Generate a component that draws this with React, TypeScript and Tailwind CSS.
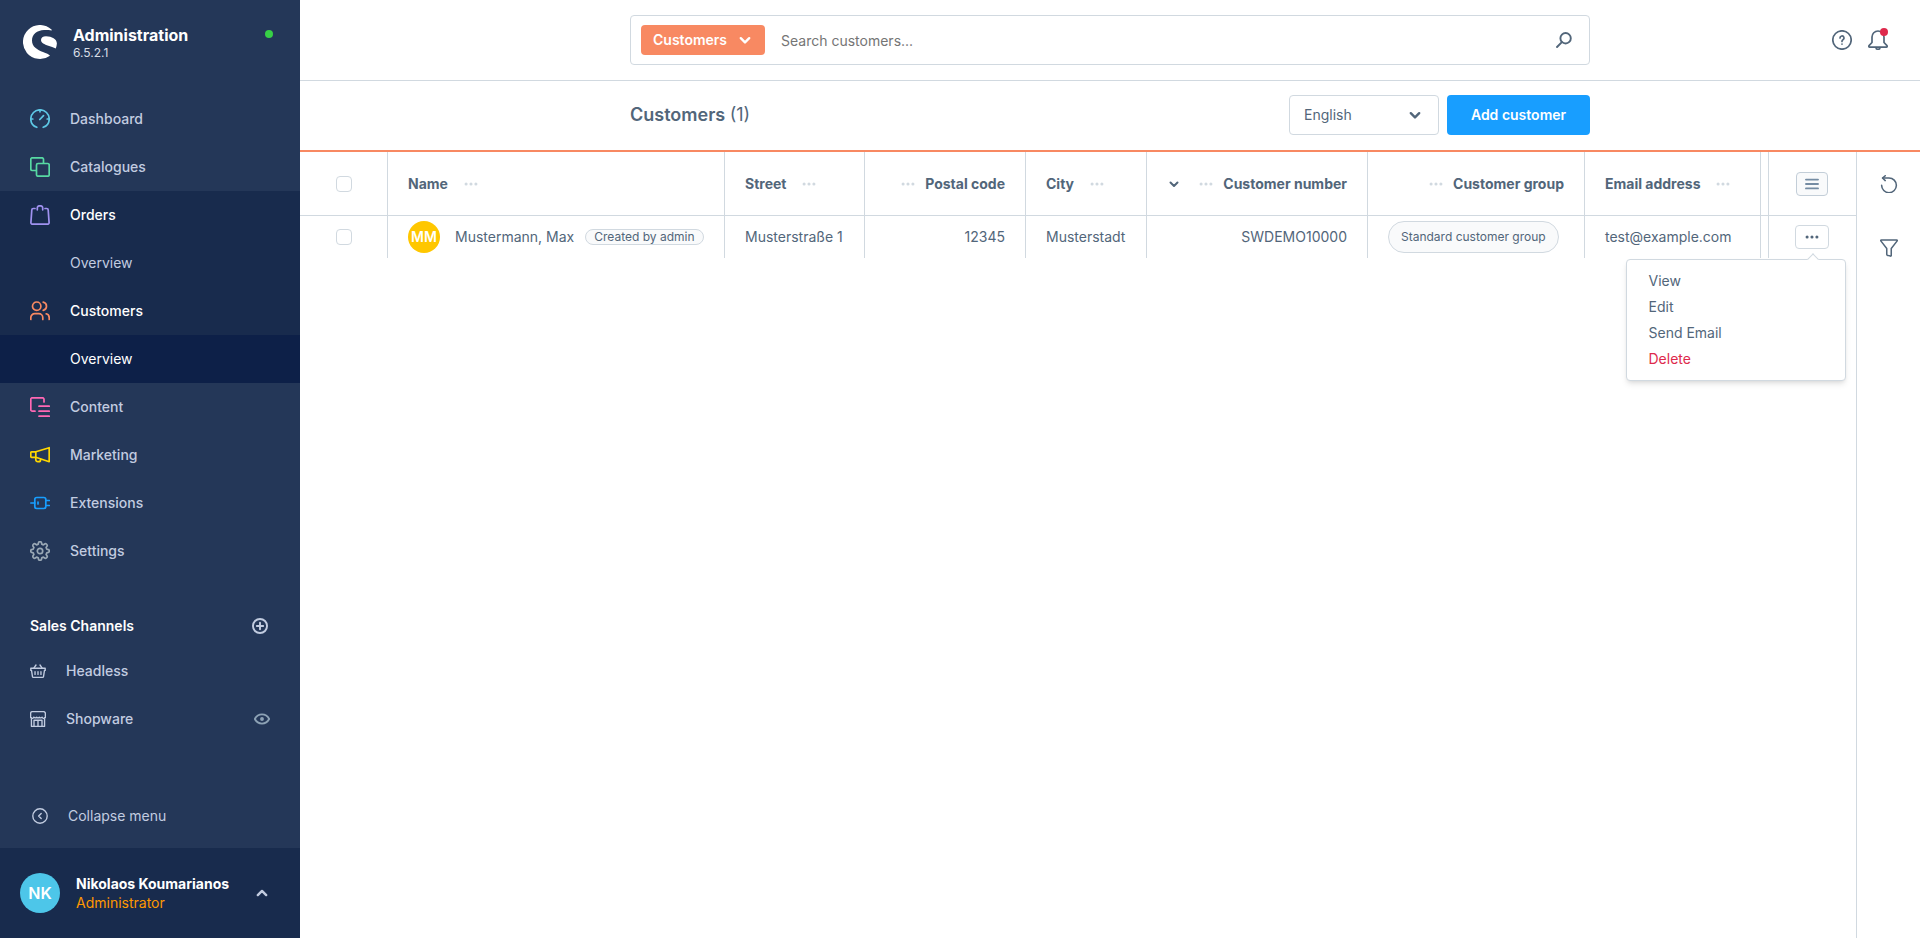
import type { ReactNode } from 'react';

type IconProps = { className?: string; children: ReactNode };

function Icon({ className = 'size-5', children }: IconProps) {
  return (
    <svg
      viewBox="0 0 20 20"
      className={className}
      fill="none"
      stroke="currentColor"
      strokeWidth="1.7"
      strokeLinecap="round"
      strokeLinejoin="round"
      aria-hidden="true"
    >
      {children}
    </svg>
  );
}

const icons = {
  dashboard: (
    <>
      <path d="M6.8 18.3C3.3 17 .8 13.8 .8 10a9.2 9.2 0 0 1 18.4 0c0 3.8-2.5 7-6 8.3" />
      <path d="M10 .8v2M.8 10h2M17.2 10h2M9.800 10.5l3.700-3.900" />
    </>
  ),
  catalogues: (
    <>
      <path d="M6 13.5H2.300A1.500 1.500 0 0 1 .8 12V2.300A1.500 1.500 0 0 1 2.300 .8H12a1.500 1.500 0 0 1 1.500 1.500V6" />
      <rect x="6.5" y="6.5" width="12.7" height="12.7" rx="1.5" />
    </>
  ),
  orders: (
    <>
      <path d="M5 3.5H3.300A1.500 1.500 0 0 0 1.800 5L.9 17.600a1.500 1.500 0 0 0 1.500 1.600h15.200a1.500 1.500 0 0 0 1.500-1.600L18.200 5a1.500 1.500 0 0 0-1.500-1.500H15" />
      <path d="M7.300 4.800V3a2.200 2.200 0 0 1 2.200-2.200h1A2.200 2.200 0 0 1 12.700 3v1.800" />
    </>
  ),
  customers: (
    <>
      <circle cx="6.7" cy="5.2" r="4.2" />
      <path d="M.8 18.4v-1.7a4 4 0 0 1 4-4h4a4 4 0 0 1 4 4v1.700" />
      <path d="M13.200 1.200a4.200 4.200 0 0 1 0 8.200M16.200 12.800a4 4 0 0 1 3 3.900v1.700" />
    </>
  ),
  content: (
    <>
      <path d="M5 14.200H2.300A1.500 1.500 0 0 1 .8 12.700V2.300A1.500 1.500 0 0 1 2.300 .8H12.500A1.500 1.500 0 0 1 14 2.300V5" />
      <path d="M9 9.2h10.3M9 14.2h10.3M9 19.2h10.3" />
    </>
  ),
  marketing: (
    <>
      <path d="M5.8 6.800 19.200 2.700v14L5.800 12.300z" />
      <path d="M5.8 6.800H1.500a.7 .7 0 0 0-.7 .7v4.100c0 .4 .3 .7 .7 .7h4.300M5.800 12.500v2.200a2 2 0 0 0 2 2h.8a2 2 0 0 0 2-2v-.5" />
    </>
  ),
  extensions: (
    <>
      <rect x="4.8" y="4.5" width="11" height="11" rx="2" />
      <path d="M.8 10h4M8 9v2M15.8 7.5h3.500M15.800 12.500h3.500" />
    </>
  ),
  settings: (
    <>
      <circle cx="10" cy="10" r="2.7" />
      <path d="M8.4 2.3a1.6 1.6 0 0 1 3.2 0l.2.9 1.6.7.9-.6a1.6 1.6 0 0 1 2.4 2.3l-.6.9.7 1.7.9.2a1.6 1.6 0 0 1 0 3.2l-.9.2-.7 1.7.6.9a1.6 1.6 0 0 1-2.4 2.3l-.9-.6-1.6.7-.2.9a1.6 1.6 0 0 1-3.2 0l-.2-.9-1.6-.7-.9.6a1.6 1.6 0 0 1-2.4-2.3l.6-.9-.7-1.7-.9-.2a1.6 1.6 0 0 1 0-3.2l.9-.2.7-1.7-.6-.9a1.6 1.6 0 0 1 2.4-2.3l.9.6 1.6-.7z" />
    </>
  ),
  headless: (
    <>
      <path d="M1 6.5h18v2.8h-.9l-1.2 7.6a1.2 1.2 0 0 1-1.2 1H4.3a1.2 1.2 0 0 1-1.2-1L1.9 9.3H1z" />
      <path d="m5 6 2.5-3.5M15 6l-2.500-3.500M6.300 10.800v3.500M10 10.800v3.500M13.700 10.800v3.500" />
    </>
  ),
  shopware: (
    <>
      <path d="M1.8 8.5v10.7h16.4V8.5M3 .8h14a2.2 2.2 0 0 1 2.2 2.2v3.5a2 2 0 0 1-4 1.200 2.200 2.200 0 0 1-3.500 .1 2.200 2.200 0 0 1-3.400 0 2.200 2.200 0 0 1-3.500-.1 2 2 0 0 1-4-1.200V3A2.200 2.200 0 0 1 3 .8z" />
      <path d="M5 19v-7.500h10V19M10 11.500V19" />
    </>
  ),
  eye: (
    <>
      <path d="M1 10c2-3.8 5.300-5.800 9-5.800s7 2 9 5.800c-2 3.800-5.300 5.800-9 5.800S3 13.800 1 10z" />
      <circle cx="10" cy="10" r="1.2" fill="currentColor" />
    </>
  ),
  plusCircle: (
    <>
      <circle cx="10" cy="10" r="8.8" />
      <path d="M10 6v8M6 10h8" />
    </>
  ),
  collapse: (
    <>
      <circle cx="10" cy="10" r="9" />
      <path d="m11.5 6.800-3.200 3.200 3.200 3.200" />
    </>
  ),
  chevronDown: <path d="m3 7 7 7 7-7" />,
  chevronUp: <path d="m3 13.500 7-7 7 7" />,
  search: (
    <>
      <circle cx="12" cy="7.8" r="6.5" />
      <path d="m7.300 12.700-6 6" />
    </>
  ),
  help: (
    <>
      <circle cx="10" cy="10" r="9.200" />
      <path d="M8 8a2 2 0 1 1 3 1.700c-.7 .4-1 .8-1 1.500v.3M10 14v.1" />
    </>
  ),
  bell: (
    <>
      <path d="M4 12.500V7a6 6 0 0 1 12 0v5.500l3 3.200c.5 .6 .1 1.500-.6 1.500H1.600c-.7 0-1.100-.9-.6-1.500z" />
      <path d="M8 17.500a2 1.800 0 0 0 4 0" />
    </>
  ),
  reset: (
    <>
      <path d="M1.800 11.500A8.200 8.200 0 1 0 10 3.300H3" />
      <path d="M5.800 .8 2.800 3.400l3 2.800" />
    </>
  ),
  filter: <path d="M1.500 1h17c.6 0 .9 .6 .6 1.100L12.500 10.500V18.200c0 .6-.4 .9-1 .8l-3-.8c-.6-.1-1-.6-1-1.200v-6.500L.9 2.100C.6 1.600 .9 1 1.500 1z" />,
  list: <path d="M2.500 4.500h15M2.500 10h15M2.500 15.500h15" />,
};

function Dots({ className }: { className?: string }) {
  return (
    <svg viewBox="0 0 20 20" className={className} fill="currentColor" aria-hidden="true">
      <circle cx="3" cy="10" r="2.200" />
      <circle cx="10" cy="10" r="2.200" />
      <circle cx="17" cy="10" r="2.200" />
    </svg>
  );
}

const navigation = [
  { label: 'Dashboard', icon: icons.dashboard, color: 'text-[#5ec8e5]' },
  { label: 'Catalogues', icon: icons.catalogues, color: 'text-[#57d9a3]' },
  { label: 'Orders', icon: icons.orders, color: 'text-[#a092f0]', open: true, child: 'Overview' },
  { label: 'Customers', icon: icons.customers, color: 'text-[#f88962]', open: true, child: 'Overview', childActive: true },
  { label: 'Content', icon: icons.content, color: 'text-[#ff68b4]' },
  { label: 'Marketing', icon: icons.marketing, color: 'text-[#ffd700]' },
  { label: 'Extensions', icon: icons.extensions, color: 'text-[#189eff]' },
  { label: 'Settings', icon: icons.settings, color: 'text-[#9aa8b5]' },
];

const columns = [
  { label: 'Name', width: 'w-[337px]' },
  { label: 'Street', width: 'w-[140px]' },
  { label: 'Postal code', width: 'w-[161px]', right: true },
  { label: 'City', width: 'w-[121px]' },
  { label: 'Customer number', width: 'w-[221px]', right: true, sorted: true },
  { label: 'Customer group', width: 'w-[217px]', right: true },
  { label: 'Email address', width: 'w-[176px]' },
];

const menuItems = ['View', 'Edit', 'Send Email', 'Delete'];

function Checkbox({ label }: { label: string }) {
  return (
    <input
      type="checkbox"
      aria-label={label}
      className="mx-auto block size-4 appearance-none rounded border border-[#d1d9e0] bg-white checked:bg-[#189eff]"
    />
  );
}

function Logo() {
  return (
    <svg viewBox="0 0 34 34" className="size-[34px]" fill="#fff" aria-hidden="true">
      <path d="M28.500 4.500A17 17 0 1 0 27 30.700c-1-1.300-3.700-2.400-7-3.700-5.600-2.200-11-5-11-11.500C9 9.500 14 5.300 21 5c3-.1 5.500 .1 7.500 .4 .4-.1 .3-.6 0-.9z" />
      <path d="M33.900 18.500c-.2-2.500-1.400-4.200-3.300-5.300-2-1.100-4.500-1.900-7.600-1.900-3.200 0-5 1.500-5 3.800 0 3 3.500 4.300 7.300 5.700 2.600 .9 5.200 1.800 7.500 2.600 .6-1.500 1-3.200 1.100-4.900z" />
    </svg>
  );
}

function Sidebar() {
  return (
    <aside className="flex w-[300px] shrink-0 flex-col bg-[#243758] text-[#c2cce0]">
      <div className="flex h-[95px] items-start gap-4 pt-[25px] pr-[27px] pl-[23px]">
        <Logo />
        <div className="flex-1 text-white">
          <div className="text-base leading-5 font-bold">Administration</div>
          <div className="text-xs leading-4 text-[#d8dde6]">6.5.2.1</div>
        </div>
        <span className="mt-[5px] size-2 rounded-full bg-[#37d046]" />
      </div>

      <nav>
        <ul>
          {navigation.map((item) => (
            <li key={item.label} className={item.open ? 'bg-[#182b4d]' : ''}>
              <a
                href="#"
                className={`flex h-12 items-center gap-5 pl-[30px] text-sm font-medium ${item.open ? 'text-white' : ''}`}
              >
                <Icon className={`size-5 ${item.color}`}>{item.icon}</Icon>
                {item.label}
              </a>
              {item.child && (
                <a
                  href="#"
                  className={`flex h-12 items-center pl-[70px] text-sm ${item.childActive ? 'bg-[#0d2048] text-white' : ''}`}
                >
                  {item.child}
                </a>
              )}
            </li>
          ))}
        </ul>
      </nav>

      <section className="mt-[30px]">
        <div className="flex h-[42px] items-center justify-between pr-8 pl-[30px]">
          <h2 className="text-sm font-semibold text-white">Sales Channels</h2>
          <button type="button" aria-label="Add sales channel">
            <Icon className="size-4 stroke-[2.4px]">{icons.plusCircle}</Icon>
          </button>
        </div>
        <a href="#" className="flex h-12 items-center gap-5 pl-[30px] text-sm font-medium">
          <Icon className="size-4">{icons.headless}</Icon>
          Headless
        </a>
        <div className="flex h-12 items-center justify-between px-[30px]">
          <a href="#" className="flex items-center gap-5 text-sm font-medium">
            <Icon className="size-4">{icons.shopware}</Icon>
            Shopware
          </a>
          <button type="button" aria-label="Open storefront" className="text-[#8da2b5]">
            <Icon className="size-4 stroke-[2.4px]">{icons.eye}</Icon>
          </button>
        </div>
      </section>

      <div className="mt-auto">
        <button type="button" className="flex h-16 w-full items-center gap-5 pl-8 text-sm">
          <Icon className="size-4">{icons.collapse}</Icon>
          Collapse menu
        </button>
        <div className="flex h-[90px] items-center gap-4 bg-[#182b4d] pr-8 pl-5">
          <span className="flex size-10 items-center justify-center rounded-full bg-[#4dc6e9] text-base font-semibold text-white">
            NK
          </span>
          <div className="flex-1 text-sm leading-[19px]">
            <div className="font-bold text-white">Nikolaos Koumarianos</div>
            <div className="text-[#ff9800]">Administrator</div>
          </div>
          <button type="button" aria-label="User menu">
            <Icon className="size-3 stroke-[4px]">{icons.chevronUp}</Icon>
          </button>
        </div>
      </div>
    </aside>
  );
}

function TopBar() {
  return (
    <header className="grid h-[81px] grid-cols-[1fr_960px_1fr] items-center border-b border-[#d1d9e0]">
      <div />
      <div className="flex h-[50px] items-center rounded border border-[#d1d9e0] pr-[17px] pl-2.5">
        <button
          type="button"
          className="flex h-[30px] items-center gap-3 rounded bg-[#f88962] pr-3.5 pl-3 text-sm font-semibold text-white"
        >
          Customers
          <Icon className="size-3 stroke-[4px]">{icons.chevronDown}</Icon>
        </button>
        <input
          type="text"
          aria-label="Search customers"
          placeholder="Search customers..."
          className="min-w-0 flex-1 px-4 pt-0.5 text-sm outline-none placeholder:text-[#757575]"
        />
        <button type="button" aria-label="Search">
          <Icon className="size-4 stroke-[2.4px]">{icons.search}</Icon>
        </button>
      </div>
      <div className="flex items-center justify-end gap-4 pr-8">
        <button type="button" aria-label="Help">
          <Icon>{icons.help}</Icon>
        </button>
        <button type="button" aria-label="Notifications" className="relative">
          <Icon>{icons.bell}</Icon>
          <span className="absolute -top-0.5 right-0 size-2 rounded-full bg-[#de294c]" />
        </button>
      </div>
    </header>
  );
}

function PageHeader() {
  return (
    <div className="grid h-[71px] grid-cols-[1fr_960px_1fr] items-start border-b-2 border-[#f88962] pt-3.5">
      <div />
      <div className="flex items-center gap-2">
        <h1 className="flex-1 text-lg font-semibold">
          Customers <span className="font-normal">(1)</span>
        </h1>
        <div className="relative">
          <select
            aria-label="Language"
            className="h-10 w-[150px] appearance-none rounded border border-[#d1d9e0] bg-white px-3.5 text-sm"
          >
            <option>English</option>
          </select>
          <Icon className="pointer-events-none absolute top-3.5 right-[18px] size-3 stroke-[4px]">
            {icons.chevronDown}
          </Icon>
        </div>
        <button type="button" className="h-10 w-[143px] rounded bg-[#189eff] text-sm font-semibold text-white">
          Add customer
        </button>
      </div>
    </div>
  );
}

function ContextMenu() {
  return (
    <div className="absolute top-[34px] -right-[17px] w-[220px] rounded border border-[#d1d9e0] bg-white py-2 shadow-md">
      <span className="absolute -top-[5px] right-7 size-2 rotate-45 border-t border-l border-[#d1d9e0] bg-white" />
      <ul>
        {menuItems.map((item) => (
          <li key={item}>
            <button
              type="button"
              className={`block w-full px-[22px] text-left leading-[26px] ${item === 'Delete' ? 'text-[#de294c]' : ''}`}
            >
              {item}
            </button>
          </li>
        ))}
      </ul>
    </div>
  );
}

function CustomerTable() {
  const cell = 'border-r border-[#d1d9e0] px-5';

  return (
    <table className="w-full table-fixed border-separate border-spacing-0 text-sm">
      <thead>
        <tr className="h-16 *:border-b *:border-[#d1d9e0]">
          <th className="w-[88px] border-r">
            <Checkbox label="Select all customers" />
          </th>
          {columns.map((column) => (
            <th key={column.label} className={`${cell} ${column.width} font-bold whitespace-nowrap`}>
              <div className={`flex items-center ${column.right ? 'flex-row-reverse gap-2.5' : 'gap-4'}`}>
                {column.label}
                <button type="button" aria-label={`${column.label} options`} className="text-[#d1d9e0]">
                  <Dots className="size-3.5" />
                </button>
                {column.sorted && <Icon className="mr-2.5 size-2.5 stroke-[4px]">{icons.chevronDown}</Icon>}
              </div>
            </th>
          ))}
          <th />
          <th className="w-[88px] border-l pr-0.5">
            <button
              type="button"
              aria-label="List settings"
              className="mx-auto flex h-6 w-8 items-center justify-center rounded border border-[#c3ced8] bg-[#f9fafb] text-[#758ca3]"
            >
              <Icon className="size-4 stroke-[2.4px]">{icons.list}</Icon>
            </button>
          </th>
        </tr>
      </thead>
      <tbody>
        <tr className="h-[42px] whitespace-nowrap">
          <td className="border-r border-[#d1d9e0]">
            <Checkbox label="Select Mustermann, Max" />
          </td>
          <td className={cell}>
            <div className="flex items-center">
              <span className="mr-[15px] flex size-8 items-center justify-center rounded-full bg-[#ffc700] text-sm font-semibold text-white">
                MM
              </span>
              <a href="#">Mustermann, Max</a>
              <span className="ml-[11px] flex h-4 items-center rounded-full border border-[#d1d9e0] bg-[#f9fafb] px-2 text-xs">
                Created by admin
              </span>
            </div>
          </td>
          <td className={cell}>Musterstraße 1</td>
          <td className={`${cell} text-right`}>12345</td>
          <td className={cell}>Musterstadt</td>
          <td className={`${cell} text-right`}>SWDEMO10000</td>
          <td className={cell}>
            <span className="inline-flex h-8 items-center rounded-full border border-[#d1d9e0] bg-[#f9fafb] px-3 text-xs">
              Standard customer group
            </span>
          </td>
          <td className={cell}>test@example.com</td>
          <td />
          <td className="border-l border-[#d1d9e0] pr-0.5">
            <div className="relative mx-auto w-[34px]">
              <button
                type="button"
                aria-label="Row actions"
                className="flex h-6 w-full items-center justify-center rounded border border-[#d1d9e0]"
              >
                <Dots className="size-3.5" />
              </button>
              <ContextMenu />
            </div>
          </td>
        </tr>
      </tbody>
    </table>
  );
}

export default function App() {
  return (
    <div className="flex min-h-screen bg-white font-['Inter',sans-serif] text-[#52667a]">
      <Sidebar />
      <div className="flex min-w-0 flex-1 flex-col">
        <TopBar />
        <PageHeader />
        <div className="flex flex-1">
          <main className="min-w-0 flex-1">
            <CustomerTable />
          </main>
          <aside className="flex w-16 flex-col items-center gap-[46px] border-l border-[#d1d9e0] pt-[23px]">
            <button type="button" aria-label="Refresh">
              <Icon className="size-[18px]">{icons.reset}</Icon>
            </button>
            <button type="button" aria-label="Filter">
              <Icon className="size-[18px]">{icons.filter}</Icon>
            </button>
          </aside>
        </div>
      </div>
    </div>
  );
}
